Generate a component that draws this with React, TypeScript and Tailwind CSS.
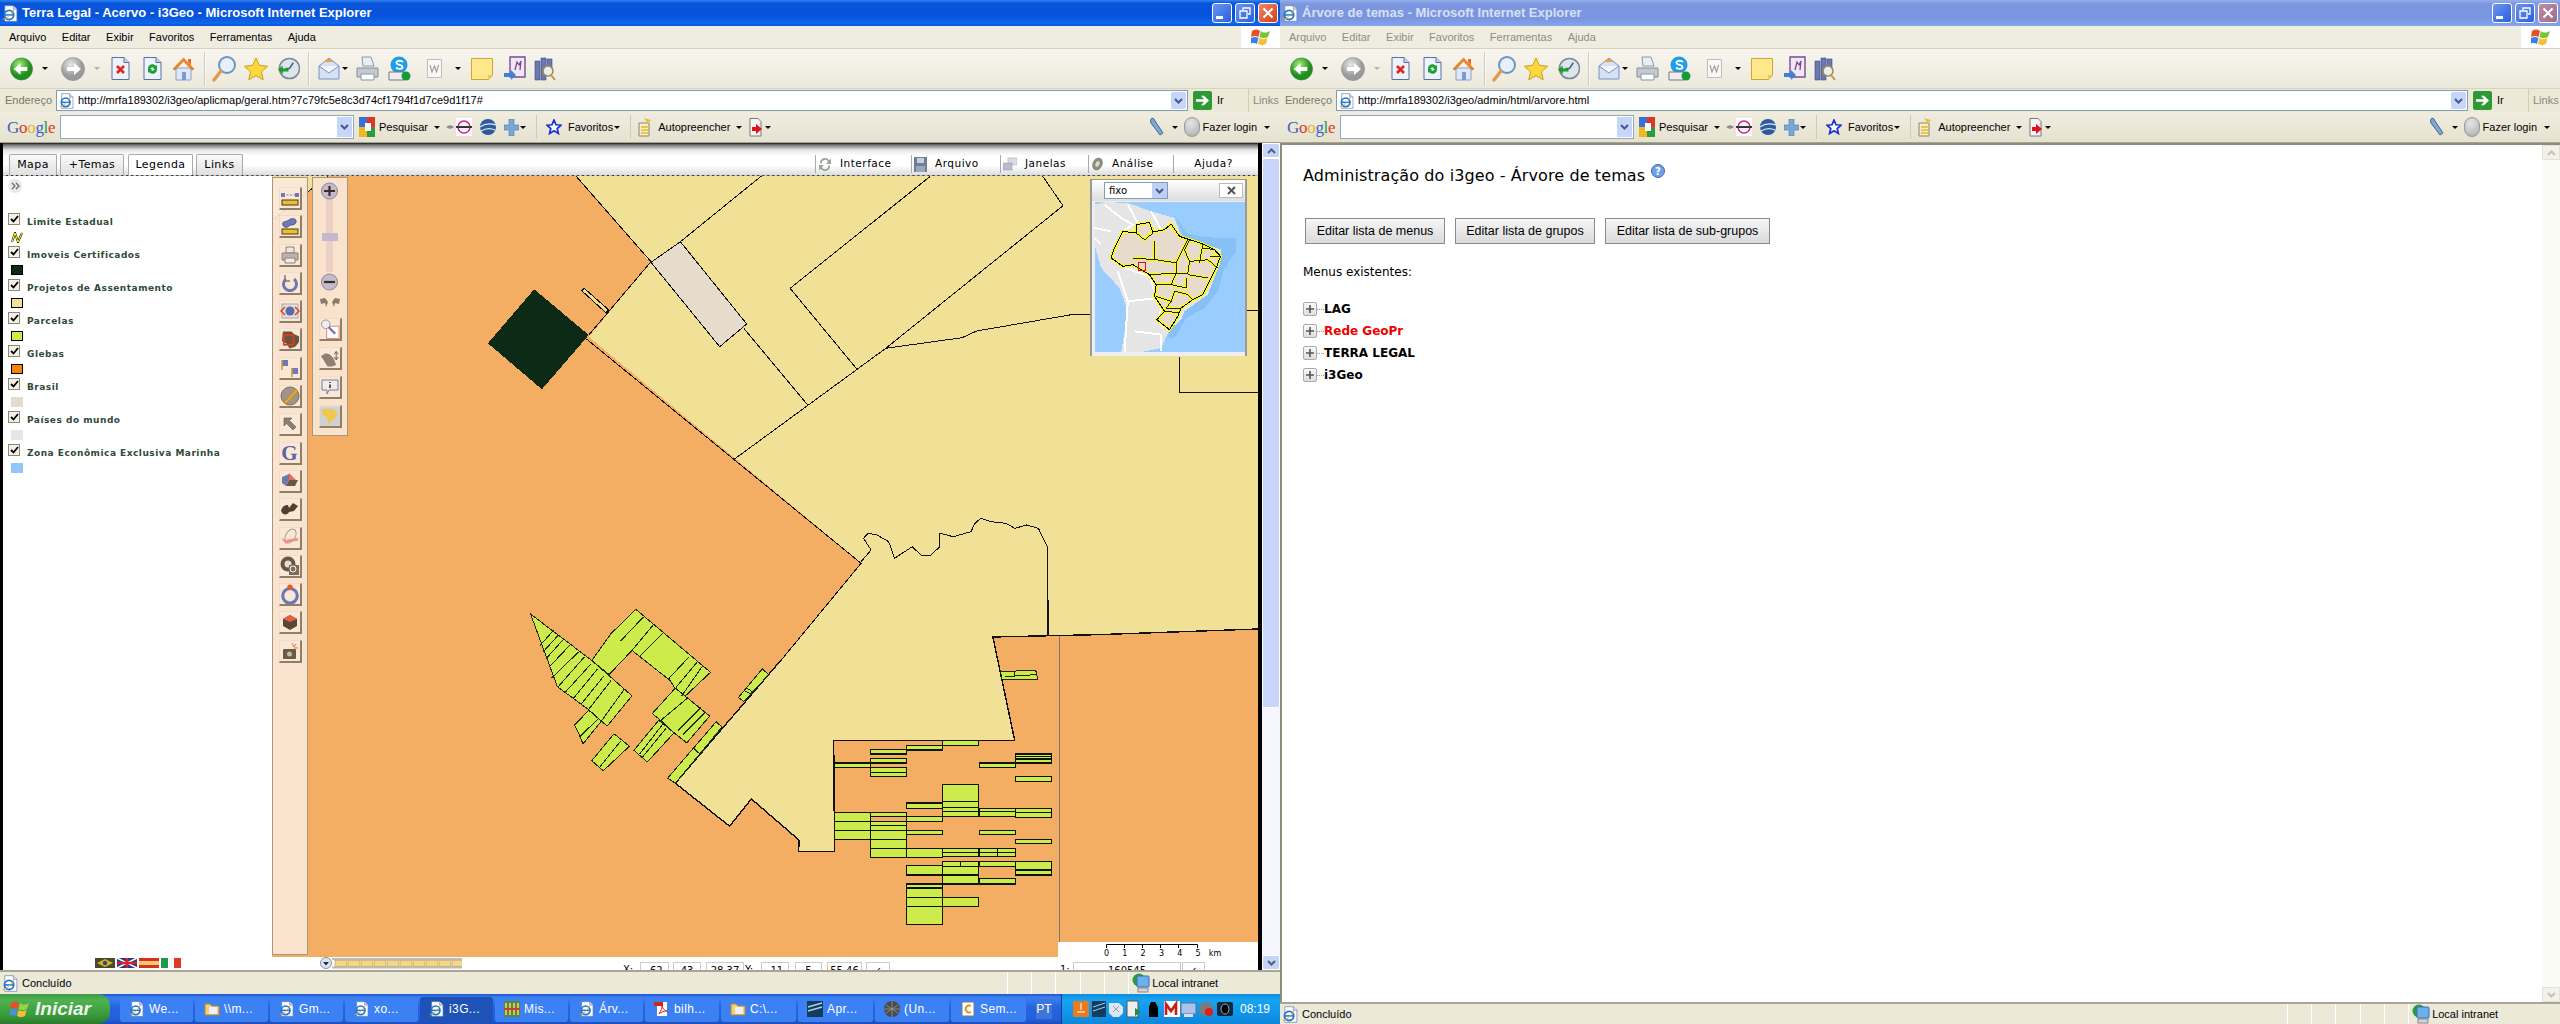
import type { ReactNode } from 'react'

// coordinates read off the two zoomed crops of the map, converted to page pixels
const z11 = (pts: number[][]) => pts.map(([x, y]) => `${(340 + x / 1.704).toFixed(1)},${(160 + y / 3).toFixed(1)}`).join(' ')
const z9 = (pts: number[][]) => pts.map(([x, y]) => `${(500 + x / 2.613).toFixed(1)},${(600 + y / 2.975).toFixed(1)}`).join(' ')
const x9 = (x: number) => 500 + x / 2.613
const y9 = (y: number) => 600 + y / 2.975

const LINE_GREEN = '#cdeb4a'

function Drop({ gray }: { gray?: boolean }) {
  return <span className={`block w-0 h-0 border-x-[3px] border-t-[3px] border-x-transparent ${gray ? 'border-t-[#b5b3a8]' : 'border-t-black'}`} />
}

function Sep() {
  return <span className="block w-[2px] h-[34px] border-l border-[#cfcbb8] border-r-0 bg-white/70" />
}

function IeIcon({ size = 16 }: { size?: number }) {
  return (
    <svg width={size} height={size} viewBox="0 0 24 24" className="shrink-0">
      <path d="M4 1h12l5 5v17H4z" fill="#fff" stroke="#6b7fa8" />
      <path d="M16 1v5h5" fill="#dbe6f7" stroke="#6b7fa8" />
      <circle cx="10" cy="14" r="6.5" fill="none" stroke="#1a78d8" strokeWidth="2.6" />
      <path d="M4 14h12" stroke="#1a78d8" strokeWidth="2.2" />
      <path d="M1 20c4 1 12-7 16-13" fill="none" stroke="#e9a21c" strokeWidth="1.4" />
    </svg>
  )
}

function ToolbarIcons() {
  return (
    <div className="flex items-center h-[39px] pl-[10px] bg-[linear-gradient(#f7f5ee,#ece9dc)]">
      <svg width="23" height="24" viewBox="0 0 24 24"><defs><radialGradient id="gb" cx="40%" cy="30%"><stop offset="0" stopColor="#a8ec7a" /><stop offset="1" stopColor="#1d8f1d" /></radialGradient></defs><circle cx="12" cy="12" r="11.5" fill="url(#gb)" stroke="#2f7a2f" strokeWidth=".6" /><path d="M18 10h-7V6l-7 6 7 6v-4h7z" fill="#fff" /></svg>
      <span className="ml-[9px]"><Drop /></span>
      <svg className="ml-[13px]" width="24" height="24" viewBox="0 0 24 24"><defs><radialGradient id="gf" cx="40%" cy="30%"><stop offset="0" stopColor="#e6e6e6" /><stop offset="1" stopColor="#9a9a9a" /></radialGradient></defs><circle cx="12" cy="12" r="11.5" fill="url(#gf)" stroke="#8a8a8a" strokeWidth=".6" /><path d="M6 10h7V6l7 6-7 6v-4H6z" fill="#fff" /></svg>
      <span className="ml-[9px]"><Drop gray /></span>
      <svg className="ml-[11px]" width="19" height="23" viewBox="0 0 19 23"><path d="M1 .5h12l5 5v17H1z" fill="#eef2fb" stroke="#5a6ea6" /><path d="M13 .5v5h5" fill="#c9d6f0" stroke="#5a6ea6" /><path d="M6 9l7 7M13 9l-7 7" stroke="#e0261c" strokeWidth="2.6" /></svg>
      <svg className="ml-[13px]" width="19" height="23" viewBox="0 0 19 23"><path d="M1 .5h12l5 5v17H1z" fill="#eef2fb" stroke="#5a6ea6" /><path d="M13 .5v5h5" fill="#c9d6f0" stroke="#5a6ea6" /><path d="M5 12a4.500 4.500 0 0 1 8-3l1-1v4h-4l1-1a2.500 2.500 0 0 0-4 1zM14 12a4.500 4.500 0 0 1-8 3l-1 1v-4h4l-1 1a2.500 2.500 0 0 0 4-1z" fill="#17a02c" /></svg>
      <svg className="ml-[10px]" width="23" height="24" viewBox="0 0 23 24"><path d="M4 11h15v12H4z" fill="#dfe8f8" stroke="#8ea2c6" /><path d="M10 15h4v8h-4z" fill="#7c9ad0" /><path d="M11.500 1L1 12l2 1 8.500-9L20 13l2-1z" fill="#f28a1e" stroke="#c8601a" strokeWidth=".6" /><path d="M16 2h3v6l-3-3z" fill="#e0702a" /></svg>
      <span className="ml-[9px]"><Sep /></span>
      <svg className="ml-[6px]" width="24" height="27" viewBox="0 0 24 27"><circle cx="15" cy="10" r="8" fill="#e4f0fb" stroke="#6a94bd" strokeWidth="2" /><path d="M9 16l-7 9" stroke="#e39a4a" strokeWidth="3.4" strokeLinecap="round" /></svg>
      <svg className="ml-[8px]" width="24" height="24" viewBox="0 0 24 24"><path d="M12 1l3.400 7.400 8.100.9-6 5.500 1.700 8L12 18.700 4.800 22.800l1.700-8-6-5.500 8.100-.9z" fill="#fbd83c" stroke="#c8a01c" /></svg>
      <svg className="ml-[9px]" width="23" height="23" viewBox="0 0 24 24"><circle cx="13" cy="12" r="10.500" fill="#dbe6ef" stroke="#7c8a96" strokeWidth="1.600" /><path d="M13 12l4-6M13 12h-4" stroke="#45607c" strokeWidth="1.500" /><path d="M1 13l5-4v3h6v3H6v3z" fill="#1c9a2a" /></svg>
      <span className="ml-[8px]"><Sep /></span>
      <svg className="ml-[8px]" width="22" height="27" viewBox="0 0 22 27"><path d="M1 11L11 3l10 8v13H1z" fill="#d7e0f5" stroke="#7a90c4" /><path d="M1 11l10 7 10-7" fill="#f3f6fd" stroke="#7a90c4" /><path d="M7 7l4-4 4 4z" fill="#f0a030" /></svg>
      <span className="ml-[2px]"><Drop /></span>
      <svg className="ml-[7px]" width="25" height="26" viewBox="0 0 25 26"><path d="M7 1h9l3 9H8z" fill="#e9eef7" stroke="#8c99aa" /><path d="M2 12h21v9H2z" fill="#c5cad0" stroke="#858c96" /><path d="M6 18h13v6H6z" fill="#fff" stroke="#8c96a4" /></svg>
      <svg className="ml-[8px]" width="23" height="26" viewBox="0 0 23 26"><circle cx="11" cy="9" r="8.500" fill="#1c9fe6" /><path d="M15 6c-2-2-7-1.500-6.500 1 .5 2.500 6 1.500 6 4s-4.500 2.500-6.500.5" fill="none" stroke="#fff" strokeWidth="1.800" /><path d="M1 16h15v8H1z" fill="#eee" stroke="#777" /><circle cx="18" cy="20" r="4.500" fill="#169a3c" /></svg>
      <svg className="ml-[16px]" width="15" height="19" viewBox="0 0 15 19"><path d="M.5.500h14v18H.5z" fill="#f8f8f8" stroke="#bdbdbd" /><path d="M3 6l2 7 2.500-6 2 6 2-7" fill="none" stroke="#9a9a9a" strokeWidth="1.100" /></svg>
      <span className="ml-[13px]"><Drop /></span>
      <svg className="ml-[10px]" width="22" height="22" viewBox="0 0 22 22"><path d="M.5.500h21V17l-4 4.500H.5z" fill="#fde98c" stroke="#d0a62c" /><path d="M21 17h-4v4" fill="#f0c850" /></svg>
      <svg className="ml-[11px]" width="22" height="25" viewBox="0 0 22 25"><path d="M6 1h15v20H6z" fill="#f0e8f5" stroke="#7a4a94" strokeWidth="1.400" /><path d="M11 14l2-8 2 3 2-4-1 9" fill="none" stroke="#7a4a94" strokeWidth="1.300" /><path d="M0 17h7v-3l5 5-5 5v-3H0z" fill="#3c80d8" /></svg>
      <svg className="ml-[8px]" width="22" height="26" viewBox="0 0 22 26"><path d="M1 5h5v19H1zM7 2h5v22H7zM13 3h5v12h-5z" fill="#6a78b4" stroke="#3d4a80" strokeWidth=".6" /><circle cx="14" cy="15" r="5" fill="#e7eef6" stroke="#a88a3c" strokeWidth="1.500" /><path d="M17 19l4 5" stroke="#c49a3a" strokeWidth="2" /></svg>
    </div>
  )
}

function AddressBar({ url }: { url: string }) {
  return (
    <div className="flex items-center h-[24px] pl-[5px] bg-[#ece9d8] border-t border-[#d8d4c0]">
      <span className="w-[51px] text-[#7a7868] text-[11px]">Endereço</span>
      <div className="flex-1 flex items-center h-[21px] border border-[#7f9db9] bg-white pl-[2px]">
        <IeIcon size={16} />
        <span className="ml-[3px] flex-1 text-[11px] whitespace-nowrap">{url}</span>
        <span className="flex items-center justify-center w-[15px] h-[17px] mr-[1px] rounded-[2px] bg-[#c7d5f8]">
          <svg width="9" height="6" viewBox="0 0 9 6"><path d="M1 1l3.500 3.500L8 1" fill="none" stroke="#3d5a94" strokeWidth="2" /></svg>
        </span>
      </div>
      <svg className="ml-[5px]" width="19" height="19" viewBox="0 0 19 19"><rect width="19" height="19" rx="2" fill="#2f9a34" /><path d="M3 8.200h8l-3-3.500h3l5 4.800-5 4.800H8l3-3.500H3z" fill="#fff" /></svg>
      <span className="ml-[5px] w-[31px] text-[11px]">Ir</span>
      <span className="w-[32px] h-[24px] flex items-center pl-[4px] border-l border-[#d2cdb6] text-[#8a8878] text-[11px]">Links</span>
    </div>
  )
}

function GoogleBar() {
  return (
    <div className="flex items-center h-[31px] pl-[7px] pr-[10px] bg-[linear-gradient(#f0ede0,#e6e2d0)] border-b border-[#a5a292] text-[11px]">
      <span className="w-[48px] font-['Liberation_Serif',serif] text-[17px] leading-none tracking-[-0.3px]">
        <span className="text-[#3a64c8]">G</span><span className="text-[#d8352a]">o</span><span className="text-[#e8b020]">o</span><span className="text-[#3a64c8]">g</span><span className="text-[#2f9a3c]">l</span><span className="text-[#d8352a]">e</span>
      </span>
      <div className="ml-[5px] flex items-center justify-end w-[294px] h-[24px] bg-white border border-[#8fa8c8] pr-[1px]">
        <span className="flex items-center justify-center w-[15px] h-[20px] bg-[#c7d5f8]">
          <svg width="9" height="6" viewBox="0 0 9 6"><path d="M1 1l3.500 3.500L8 1" fill="none" stroke="#3d5a94" strokeWidth="2" /></svg>
        </span>
      </div>
      <svg className="ml-[5px]" width="16" height="20" viewBox="0 0 16 20"><rect y="0" width="8" height="10" fill="#3a70d8" /><rect x="8" width="8" height="10" fill="#e0352a" /><rect y="10" width="8" height="10" fill="#f0b820" /><rect x="8" y="10" width="8" height="10" fill="#2f9a3c" /><path d="M6 6h6v8H6z" fill="#fff" /></svg>
      <span className="ml-[4px]">Pesquisar</span>
      <span className="ml-[6px]"><Drop /></span>
      <span className="ml-[6px] text-[#888] text-[8px]">◂▸</span>
      <svg className="ml-[2px]" width="16" height="18" viewBox="0 0 16 18"><rect width="16" height="18" fill="#fff" /><circle cx="8" cy="9" r="6" fill="none" stroke="#d81c8c" strokeWidth="1.500" /><path d="M0 9h16" stroke="#333" strokeWidth="2" /></svg>
      <svg className="ml-[8px]" width="16" height="18" viewBox="0 0 16 18"><circle cx="8" cy="9" r="8" fill="#2c5a9c" /><path d="M0 9c5-4 10-4 16-2M1 13c5-3 10-3 14-1" fill="none" stroke="#dfe8f0" strokeWidth="1.300" /></svg>
      <svg className="ml-[8px]" width="15" height="17" viewBox="0 0 15 17"><path d="M5 0h5v6h5v5h-5v6H5v-6H0V6h5z" fill="#7ba7d4" stroke="#4a78a8" strokeWidth=".6" /></svg>
      <span className="ml-[1px]"><Drop /></span>
      <span className="ml-[10px] w-px h-[24px] bg-[#cfcbb8]" />
      <svg className="ml-[9px]" width="16" height="16" viewBox="0 0 16 16"><path d="M8 1l2 4.800 5 .4-3.800 3.300 1.200 5L8 11.800 3.600 14.500l1.200-5L1 6.200l5-.4z" fill="#fff" stroke="#1c2fd8" strokeWidth="1.700" /></svg>
      <span className="ml-[6px]">Favoritos</span>
      <span className="ml-[1px]"><Drop /></span>
      <span className="ml-[10px] w-px h-[24px] bg-[#cfcbb8]" />
      <svg className="ml-[7px]" width="15" height="20" viewBox="0 0 15 20"><path d="M1 6h10v13H1z" fill="#f4efd2" stroke="#8a8468" /><path d="M3 10h7M3 13h7M3 16h7" stroke="#e8b820" strokeWidth="1.600" /><path d="M6 1l7 2-3 4z" fill="#e8c040" /></svg>
      <span className="ml-[5px]">Autopreencher</span>
      <span className="ml-[6px]"><Drop /></span>
      <svg className="ml-[7px]" width="15" height="19" viewBox="0 0 15 19"><path d="M1 .5h8l3 3V18H1z" fill="#f5f5f5" stroke="#777" /><path d="M3 9h4V6l6 5-6 5v-3H3z" fill="#e0121c" /></svg>
      <span className="ml-[1px]"><Drop /></span>
      <span className="flex-1" />
      <svg width="17" height="20" viewBox="0 0 17 20"><path d="M3 1a4 4 0 0 0-1 5l9 12 3-2L6 4a4 4 0 0 0-3-3z" fill="#7fa9d4" stroke="#41688f" /></svg>
      <span className="ml-[6px]"><Drop /></span>
      <span className="ml-[6px] w-[16px] h-[20px] rounded-full bg-[radial-gradient(circle_at_40%_30%,#e6e6e6,#aaa)] border border-[#999]" />
      <span className="ml-[3px]">Fazer login</span>
      <span className="ml-[7px]"><Drop /></span>
    </div>
  )
}

function WindowChrome({ title, url, active, children }: { title: string; url: string; active: boolean; children: ReactNode }) {
  return (
    <div className="flex flex-col flex-1 min-h-0">
      <div className={`flex items-center h-[26px] pl-[2px] pr-[2px] ${active ? 'bg-[linear-gradient(#2f84f2,#0a55da_12%,#0553db_60%,#0f66ec_90%,#0a55d5)]' : 'bg-[linear-gradient(#94b0ea,#7c97e0_15%,#7a95df_70%,#84a6ea)]'}`}>
        <IeIcon size={17} />
        <span className={`ml-[3px] flex-1 font-bold text-[13px] whitespace-nowrap ${active ? 'text-white' : 'text-[#d8e0f5]'}`}>{title}</span>
        <span className="flex items-center justify-center w-[20px] h-[20px] rounded-[3px] border border-white bg-[linear-gradient(135deg,#6a96ee,#2a5ee0)]"><span className="mt-[8px] mr-[5px] w-[7px] h-[3px] bg-white" /></span>
        <span className="ml-[3px] flex items-center justify-center w-[20px] h-[20px] rounded-[3px] border border-white bg-[linear-gradient(135deg,#6a96ee,#2a5ee0)]">
          <svg width="12" height="12" viewBox="0 0 12 12" fill="none" stroke="#fff" strokeWidth="1.300"><path d="M4 3V1h7v6H9" /><path d="M1 4h7v7H1z" /></svg>
        </span>
        <span className={`ml-[3px] flex items-center justify-center w-[20px] h-[20px] rounded-[3px] border border-white ${active ? 'bg-[linear-gradient(135deg,#ee8a6c,#d83c14)]' : 'bg-[linear-gradient(135deg,#b88ea6,#a06a8c)]'}`}>
          <svg width="12" height="12" viewBox="0 0 12 12"><path d="M1.500 1.500l9 9M10.500 1.500l-9 9" stroke="#fff" strokeWidth="2" /></svg>
        </span>
      </div>
      <div className="flex items-stretch h-[23px] bg-[#efece0] border-b border-[#d8d2bd]">
        <div className={`flex flex-1 items-center gap-[15.500px] pl-[9px] text-[11px] ${active ? 'text-black' : 'text-[#8f8d80]'}`}>
          {['Arquivo', 'Editar', 'Exibir', 'Favoritos', 'Ferramentas', 'Ajuda'].map((m) => <span key={m}>{m}</span>)}
        </div>
        <div className="flex items-center justify-center w-[39px] bg-white">
          <svg width="20" height="18" viewBox="0 0 20 18"><path d="M1 3c3-2 5-2 8 0L7.500 9C5 7.500 3 7.500 0 9z" fill="#e8502a" /><path d="M10 3c3 2 5 2 9 0l-2 6c-3 1.500-5 1.500-8.500 0z" fill="#7cc03c" /><path d="M0 10c3-1.500 5-1.500 7.500 0L6 16c-2.500-1.500-5-1.500-7.500 0z" fill="#3c7fe8" /><path d="M8.500 10c3 1.500 5 1.500 8 0l-1.500 6c-3 1.500-5 1.500-8 0z" fill="#f5c030" /></svg>
        </div>
      </div>
      <ToolbarIcons />
      <AddressBar url={url} />
      <GoogleBar />
      {children}
      <div className={`flex items-center shrink-0 bg-[#ece9d8] border-t-2 border-[#a8a594] pl-[2px] text-[11px] ${active ? 'h-[24px]' : 'h-[22px]'}`}>
        <IeIcon size={17} />
        <span className="ml-[3px] w-[985px]">Concluído</span>
        {[0, 1, 2, 3, 4, 5].map((i) => <span key={i} className="w-[24.200px] h-full border-l border-[#fff]" />)}
        <svg className="ml-[-20px]" width="18" height="20" viewBox="0 0 18 20"><circle cx="7" cy="7" r="6.500" fill="#2a9a4a" /><rect x="5" y="3" width="12" height="11" rx="1" fill="#6ab0ee" stroke="#3c6ea8" /><rect x="6" y="15" width="10" height="4" fill="#cfd3dc" stroke="#888" /></svg>
        <span className="ml-[2px]">Local intranet</span>
      </div>
    </div>
  )
}

function Tab({ label, w, on }: { label: string; w: string; on?: boolean }) {
  return (
    <span className={`flex items-center justify-center h-[21px] rounded-t-[2px] border border-b-0 border-[#aaa] font-['DejaVu_Sans',sans-serif] text-[11px] tracking-[0.4px] ${w} ${on ? 'bg-white' : 'bg-[linear-gradient(#fafafa,#e0e0e0)]'}`}>{label}</span>
  )
}

function TopMenu() {
  const items: [string, string, ReactNode][] = [
    ['Interface', 'w-[96px]', <svg width="14" height="15" viewBox="0 0 14 15"><path d="M2 6a5 5 0 0 1 9-3l2-1v5H8l2-2a3 3 0 0 0-6 2zM12 9a5 5 0 0 1-9 3l-2 1V8h5l-2 2a3 3 0 0 0 6-2z" fill="#9aa59a" /></svg>],
    ['Arquivo', 'w-[89px]', <svg width="13" height="15" viewBox="0 0 13 15"><rect width="13" height="15" fill="#6e7e98" /><rect x="3" y="1" width="7" height="5" fill="#c8d0dc" /><rect x="2" y="9" width="9" height="6" fill="#9aa8bc" /></svg>],
    ['Janelas', 'w-[88px]', <svg width="14" height="14" viewBox="0 0 14 14"><rect x="5" y="1" width="9" height="7" fill="#d8dcea" stroke="#aab" strokeWidth=".6" /><rect x="0" y="6" width="9" height="7" fill="#b8bcd0" stroke="#99a" strokeWidth=".6" /></svg>],
    ['Análise', 'w-[85px]', <svg width="13" height="14" viewBox="0 0 13 14"><ellipse cx="6.500" cy="7" rx="5" ry="6.500" transform="rotate(25 6.500 7)" fill="#8c8c7a" /><ellipse cx="6.500" cy="7" rx="2" ry="3" transform="rotate(25 6.500 7)" fill="#d8d8cc" /></svg>],
  ]
  return (
    <div className="ml-auto flex self-start mt-[12px] h-[18px] font-['DejaVu_Sans',sans-serif] text-[10.500px] tracking-[0.5px]">
      {items.map(([label, w, icon]) => (
        <span key={label} className={`flex items-center gap-[8px] pl-[2px] border-l border-[#aaa] ${w}`}>
          {icon}
          {label}
        </span>
      ))}
      <span className="flex items-center justify-center w-[85px] pr-[5px] border-l border-[#aaa]">Ajuda?</span>
    </div>
  )
}

const LEGEND: { label: string; swatch: string; line?: boolean; noBorder?: boolean }[] = [
  { label: 'Limite Estadual', swatch: '', line: true },
  { label: 'Imoveis Certificados', swatch: '#0c2a15' },
  { label: 'Projetos de Assentamento', swatch: '#f0e196' },
  { label: 'Parcelas', swatch: LINE_GREEN },
  { label: 'Glebas', swatch: '#f98200' },
  { label: 'Brasil', swatch: '#e6dccb', noBorder: true },
  { label: 'Países do mundo', swatch: '#e6e6e6', noBorder: true },
  { label: 'Zona Econômica Exclusiva Marinha', swatch: '#8fc6fb', noBorder: true },
]

function Legend() {
  return (
    <div className="flex flex-col w-[269px] shrink-0 bg-white pl-[5px] overflow-hidden">
      <span className="mt-[3px] flex items-center justify-center w-[14px] h-[14px] rounded-full bg-[#e8e8e8]">
        <svg width="9" height="8" viewBox="0 0 9 8"><path d="M1 1l3 3-3 3M5 1l3 3-3 3" fill="none" stroke="#666" strokeWidth="1.200" /></svg>
      </span>
      <div className="mt-[20px] flex flex-col">
        {LEGEND.map((item) => (
          <div key={item.label} className="h-[33px]">
            <div className="flex items-start h-[16px]">
              <span className="flex items-center justify-center w-[12px] h-[12px] bg-[#f3f0e6] border border-[#8a8878]">
                <svg width="9" height="8" viewBox="0 0 9 8"><path d="M1 4l2.500 2.500L8 1" fill="none" stroke="#000" strokeWidth="1.800" /></svg>
              </span>
              <span className="ml-[7px] mt-[2px] font-['DejaVu_Sans',sans-serif] font-bold text-[9px] leading-[14px] tracking-[0.5px] text-[#2f4a38] whitespace-nowrap">{item.label}</span>
            </div>
            <div className="mt-[3px] ml-[3px]">
              {item.line ? (
                <svg width="12" height="11" viewBox="0 0 12 11"><path d="M1 10L4 1l3 9 4-9" fill="none" stroke="#111" strokeWidth="2" /><path d="M1 10L4 1l3 9 4-9" fill="none" stroke="#ff0" strokeWidth="1" /></svg>
              ) : (
                <span className={`block w-[12px] h-[10px] ${item.noBorder ? '' : 'border border-black'}`} style={{ background: item.swatch }} />
              )}
            </div>
          </div>
        ))}
      </div>
    </div>
  )
}

const PLOTS: number[][] = [
  [968, 445, 1062, 458], [1062, 432, 1157, 446], [1157, 418, 1251, 433], [968, 472, 1062, 485], [874, 485, 968, 499],
  [968, 499, 1062, 526, 512], [1252, 485, 1347, 499], [1347, 458, 1442, 485, 466, 473], [1347, 526, 1442, 541],
  [1157, 550, 1251, 645, 600, 617, 630], [1062, 604, 1157, 620], [1252, 620, 1347, 643, 630], [1347, 620, 1442, 647, 633],
  [874, 632, 968, 712, 658, 685], [968, 632, 1062, 645], [1062, 645, 1157, 658], [968, 658, 1062, 765, 672, 685, 712, 739],
  [1062, 685, 1157, 698], [1252, 685, 1347, 698], [1347, 712, 1442, 725], [1062, 739, 1157, 766], [1157, 739, 1251, 764, 750],
  [1252, 739, 1347, 764, 750], [1157, 779, 1251, 845, 793, 818], [1252, 779, 1347, 792], [1347, 779, 1442, 818, 803],
  [1062, 791, 1157, 818], [1252, 829, 1347, 845], [1063, 845, 1157, 965, 857, 884, 911], [1157, 884, 1251, 911],
]

const LEFT_PARCELS: number[][][] = [
  [[80, 42], [240, 180], [345, 285], [280, 375], [230, 325], [150, 258]],
  [[355, 28], [550, 215], [475, 295], [445, 240], [345, 150], [285, 222], [240, 180], [290, 100]],
  [[195, 372], [232, 328], [265, 360], [217, 428], [205, 395]],
  [[240, 478], [298, 398], [338, 435], [270, 508]],
  [[398, 338], [458, 262], [548, 345], [488, 425], [455, 395], [420, 358]],
  [[350, 447], [415, 358], [455, 395], [385, 482]],
  [[438, 530], [565, 362], [580, 378], [458, 545]],
  [[623, 290], [685, 205], [702, 222], [637, 302]],
  [[1308, 212], [1400, 210], [1405, 235], [1312, 237]],
]

const LEFT_LINES: number[][] = [
  [105, 135, 140, 90], [112, 155, 152, 105], [120, 175, 165, 118], [128, 200, 182, 135], [135, 232, 205, 155], [152, 258, 220, 170],
  [170, 275, 238, 190], [190, 295, 255, 205], [212, 310, 272, 225], [232, 325, 290, 240], [265, 360, 325, 265],
  [315, 122, 375, 50], [345, 150, 400, 75], [365, 168, 425, 100], [440, 235, 495, 168], [460, 260, 515, 185], [475, 285, 530, 195],
  [210, 405, 255, 355], [262, 495, 315, 420], [365, 458, 425, 370], [372, 468, 435, 380], [420, 358, 490, 292], [465, 388, 525, 320],
  [478, 400, 535, 335], [505, 440, 522, 458], [645, 262, 662, 275], [640, 270, 658, 282], [1320, 228, 1400, 222], [1345, 212, 1345, 225],
]

function MapDrawing() {
  return (
    <svg width="986" height="781" viewBox="272 176 986 781" className="block" shapeRendering="crispEdges">
      <rect x="272" y="176" width="986" height="781" fill="#f4ae63" />
      <polygon points="272,176 328,176 272,220" fill="#f0e196" />
      <path d="M272 220L328 176" stroke="#222" fill="none" />
      <polygon points="576,176 650,262 589,337 861,563 781,660 675,783 730,826 751,799 799,840 798.500,851 834.500,851 834,740.500 1015,740.500 993,637 1258,629 1258,176" fill="#f0e196" />
      <g fill="none" stroke="#111" strokeWidth="1">
        <polyline points={z11([[402, 48], [530, 305], [424, 525]])} />
        <polyline points={z11([[718, 48], [580, 245], [530, 307]])} />
        <polyline points={z11([[420, 537], [888, 1210], [752, 1500]])} />
        <polyline points={z11([[688, 505], [797, 735]])} />
        <polyline points={z11([[1005, 50], [767, 385], [882, 630]])} />
        <polyline points={z11([[1197, 48], [1232, 137], [930, 565], [670, 900]])} />
        <polyline points={z11([[930, 565], [1060, 533], [1085, 513], [1250, 463], [1280, 463]])} />
        <polyline points={z11([[1545, 452], [1568, 452]])} />
        <polyline points={z11([[1430, 590], [1430, 697], [1568, 697]])} />
        <polyline points={z11([[888, 1205], [905, 1170], [892, 1135], [900, 1120], [915, 1125], [935, 1145], [945, 1195], [975, 1160], [990, 1185], [1005, 1188], [1022, 1160], [1022, 1120], [1045, 1130], [1075, 1115], [1082, 1090], [1092, 1075], [1110, 1085], [1135, 1090], [1150, 1105], [1170, 1095], [1190, 1105], [1205, 1160], [1207, 1425]])} />
        <polyline points={z9([[735, 178], [458, 545], [600, 673], [657, 592], [782, 715], [780, 748], [874, 748], [872, 418], [1345, 418], [1288, 110], [1568, 103]])} strokeWidth="1.400" />
        <path d="M1100 634.600L1258 629" strokeWidth="1.400" />
        <path d="M1048 600V635" strokeWidth="1.400" />
        <path d="M1059.500 636V945" stroke="#777" />
      </g>
      <polygon points={z11([[580, 245], [693, 492], [647, 560], [530, 307]])} fill="#e6dccb" stroke="#111" />
      <polygon points={z11([[331, 388], [424, 525], [344, 688], [252, 550]])} fill="#0c2a15" />
      <polygon points={z11([[412, 392], [416, 385], [458, 450], [453, 458]])} fill="#f0e196" stroke="#111" />
      <g fill={LINE_GREEN} stroke="#1c2a10" strokeWidth="1">
        {LEFT_PARCELS.map((p, i) => <polygon key={i} points={z9(p)} />)}
        {LEFT_LINES.map(([a, b, c, d], i) => <line key={i} x1={x9(a)} y1={y9(b)} x2={x9(c)} y2={y9(d)} />)}
      </g>
      <g fill={LINE_GREEN} stroke="#0c1408" strokeWidth="1.200">
        {PLOTS.map(([a, b, c, d, ...rows], i) => (
          <g key={i}>
            <rect x={x9(a)} y={y9(b)} width={x9(c) - x9(a)} height={y9(d) - y9(b)} />
            {rows.map((r) => <line key={r} x1={x9(a)} x2={x9(c)} y1={y9(r)} y2={y9(r)} />)}
          </g>
        ))}
        <line x1={x9(1300)} x2={x9(1300)} y1={y9(739)} y2={y9(764)} />
        <line x1={x9(1204)} x2={x9(1204)} y1={y9(779)} y2={y9(793)} />
      </g>
    </svg>
  )
}

const BRAZIL = 'M225,190 L265,183 L275,212 L310,205 L330,188 L355,225 L385,235 L425,248 L460,265 L478,285 L465,320 L440,370 L425,400 L395,415 L360,440 L350,465 L325,505 L287,475 L310,450 L280,405 L285,370 L265,340 L215,310 L185,315 L150,290 L158,265 L185,210 L225,215 Z'
const STATES = 'M280,240 L280,295 L345,305 L380,235 M215,290 L280,295 M265,340 L345,335 L345,305 M345,335 L380,335 L385,300 L370,265 L385,235 M385,300 L440,295 L470,320 M425,248 L415,305 M380,340 L440,350 M345,335 L330,370 L285,370 M330,370 L375,380 L375,350 M285,405 L330,420 L340,390 L380,400 L395,415 M330,420 L315,440 L360,440 M310,450 L355,455 M225,215 L250,235 L275,212 M425,260 L460,265 M445,285 L478,285'

function MiniMap() {
  return (
    <div className="absolute left-[818px] top-[3px] flex flex-col w-[157px] h-[177px] bg-[#eee] border-x-2 border-t border-[#999]">
      <div className="flex items-center h-[21px] shrink-0 bg-[linear-gradient(#fff,#ddd)]">
        <div className="ml-[12px] flex items-center justify-between w-[64px] h-[17px] bg-white border border-[#7f9db9] pl-[4px] text-[10px] font-['DejaVu_Sans',sans-serif]">
          fixo
          <span className="flex items-center justify-center w-[15px] h-[15px] bg-[#c0cff5]">
            <svg width="9" height="6" viewBox="0 0 9 6"><path d="M1 1l3.500 3.500L8 1" fill="none" stroke="#3d5a94" strokeWidth="2" /></svg>
          </span>
        </div>
        <span className="ml-auto mr-[2px] flex items-center justify-center w-[24px] h-[15px] bg-white border border-[#bbb]">
          <svg width="9" height="9" viewBox="0 0 9 9"><path d="M1 1l7 7M8 1L1 8" stroke="#555" strokeWidth="2" /></svg>
        </span>
      </div>
      <svg className="ml-[2px] mt-px" width="151" height="150" viewBox="100 122 450 450" shapeRendering="crispEdges">
        <rect x="100" y="122" width="450" height="450" fill="#99ccff" />
        <path d="M340,160 L375,215 L430,228 L525,230 L525,270 L490,320 L470,390 L430,440 L375,470 L340,530 L320,530 L340,440 L400,300 Z" fill="#86c0f4" />
        <path d="M100,130 L130,122 L200,125 L270,150 L340,170 L360,225 L420,245 L480,265 L475,310 L440,400 L370,450 L360,475 L325,505 L300,560 L240,572 L180,572 L200,450 L175,380 L120,320 L100,250 Z" fill="#e5e5e5" />
        <path d="M130,130 L180,170 L215,190 L185,210 L150,290 L190,320 L265,345 L285,400 L300,440 L290,480 L325,510 M100,200 L150,210 M120,250 L100,230 M170,330 L200,420 L190,572 M200,420 L290,410 M220,510 L300,520 L300,570 M270,150 L300,205 M200,130 L230,185" fill="none" stroke="#fff" strokeWidth="6" />
        <path d={BRAZIL} fill="#e7dccb" stroke="#ffff00" strokeWidth="9" />
        <path d={STATES} fill="none" stroke="#ffff00" strokeWidth="8" />
        <path d={BRAZIL} fill="none" stroke="#000" strokeWidth="3" />
        <path d={STATES} fill="none" stroke="#000" strokeWidth="2.600" />
        <rect x="232" y="303" width="21" height="23" fill="none" stroke="#e01010" strokeWidth="3" />
      </svg>
    </div>
  )
}

function MapBtn({ children }: { children: ReactNode }) {
  return (
    <span className="flex items-center justify-center w-[23px] h-[23px] shrink-0 bg-[#fbeadb]/60 border-t border-l border-[#f0dcc8] border-r-2 border-b-2 border-r-[#8f7f68] border-b-[#8f7f68] overflow-hidden">{children}</span>
  )
}

const P = '#7078b4'
const BR = '#6a5540'
const TOOL_ICONS: ReactNode[] = [
  <svg width="18" height="16" viewBox="0 0 18 16"><path d="M2 5h14" stroke={P} strokeDasharray="2 1.500" /><rect x="0" y="3" width="4" height="4" fill={P} /><rect x="14" y="3" width="4" height="4" fill={P} /><rect x="1" y="10" width="16" height="5" fill="#e8c030" stroke="#4a3a10" /></svg>,
  <svg width="18" height="18" viewBox="0 0 18 18"><path d="M2 8c-2-4 4-3 6-5s8-2 7 2-5 2-7 4-5 2-6-1z" fill={P} stroke="#4a5490" /><rect x="1" y="12" width="16" height="5" fill="#e8c030" stroke="#4a3a10" /></svg>,
  <svg width="18" height="18" viewBox="0 0 18 18"><path d="M5 1h8v6H5z" fill="#efe8df" stroke="#8f8070" /><path d="M1 7h16v7H1z" fill="#c0b0b0" stroke="#8f8070" /><path d="M4 12h10v5H4z" fill="#f2ebe2" stroke="#8f8070" /></svg>,
  <svg width="18" height="18" viewBox="0 0 18 18"><path d="M13 5a6.500 6.500 0 1 1-8 0" fill="none" stroke={P} strokeWidth="3" /><path d="M4 1v6h5" fill="none" stroke="#8a7a6a" strokeWidth="1.500" /></svg>,
  <svg width="20" height="18" viewBox="0 0 20 18"><rect x="2" y="2" width="16" height="14" fill="#e6ddd5" stroke="#aaa" /><circle cx="10" cy="9" r="4.500" fill="#5a6ab0" /><path d="M5 5L1 9l4 4M15 5l4 4-4 4" fill="none" stroke="#e04020" strokeWidth="1.500" /></svg>,
  <svg width="21" height="21" viewBox="0 0 21 21"><path d="M3 2h9l3 3 5 2v6l-4 5-6 2-3-5-5-3z" fill={BR} /><rect x="4" y="6" width="10" height="10" fill="none" stroke="#e03c1c" strokeWidth="1.800" /></svg>,
  <svg width="20" height="20" viewBox="0 0 20 20"><path d="M2 2h6v6H2zM12 10h6v6h-6z" fill={P} /><path d="M2 2v10M12 10v9" stroke="#c89a3c" strokeWidth="1.600" /></svg>,
  <svg width="20" height="20" viewBox="0 0 20 20"><circle cx="10" cy="10" r="9" fill="#a09488" stroke="#7a6e60" /><path d="M4 16L16 3l2 2L6 18z" fill="#e8a830" stroke="#b87c18" strokeWidth=".6" /></svg>,
  <svg width="16" height="16" viewBox="0 0 16 16"><path d="M2 2h8L7.500 4.500 14 11l-3 3-6.500-6.500L2 10z" fill="#8a8074" stroke="#5c5448" strokeWidth=".6" /></svg>,
  <span className="font-['Liberation_Serif',serif] font-bold text-[21px] leading-[20px] text-[#5a62a8]">G</span>,
  <svg width="18" height="18" viewBox="0 0 18 18"><path d="M8 1l7 7H8z" fill="#e86a50" /><path d="M8 8h9l-3 6H5z" fill={BR} /><path d="M8 2v6l-3 6-4-3V5z" fill={P} /></svg>,
  <svg width="19" height="14" viewBox="0 0 19 14"><path d="M1 9c1-4 3-6 7-6l1 3 4-5 5 3-4 5-5 1c-1 3-6 4-8-1z" fill="#51402f" /></svg>,
  <svg width="21" height="21" viewBox="0 0 21 21"><ellipse cx="11" cy="9" rx="5" ry="8" fill="none" stroke="#a89c90" transform="rotate(30 11 9)" /><path d="M1 11l5 2 5-1 8-1v3l-8 1-5 2z" fill="#ee8f88" /></svg>,
  <svg width="20" height="20" viewBox="0 0 20 20"><circle cx="8" cy="8" r="7.500" fill={BR} /><circle cx="8" cy="8" r="3.500" fill="#e6ddd5" /><rect x="9" y="9" width="10" height="10" fill="#7a6a58" /><circle cx="13" cy="13" r="3" fill="none" stroke="#fff" /></svg>,
  <svg width="22" height="22" viewBox="0 0 22 22"><circle cx="11" cy="13" r="8" fill="none" stroke="#6a78b4" strokeWidth="3.400" /><circle cx="11" cy="3.500" r="3" fill="#e85a30" /></svg>,
  <svg width="18" height="18" viewBox="0 0 18 18"><path d="M2 6l7-4 7 4v7l-7 4-7-4z" fill="#5a4636" /><path d="M2 6l7-4 7 4-7 3z" fill="#e06040" /></svg>,
  <svg width="18" height="18" viewBox="0 0 18 18"><rect x="2" y="7" width="13" height="10" rx="1" fill="#6a5a48" /><circle cx="8.500" cy="12" r="2.500" fill="#c8b8a8" /><path d="M11 1l2 4M15 2l-2 3M17 6h-4" stroke="#e8703c" /></svg>,
]

function MapPanels() {
  return (
    <>
      <div className="absolute left-0 top-[1px] bottom-[2px] w-[36px] flex flex-col items-center gap-[5.300px] pt-[9px] bg-[#fbeadb]/90 border border-[#a8957e] overflow-hidden">
        {TOOL_ICONS.map((icon, i) => <MapBtn key={i}>{icon}</MapBtn>)}
      </div>
      <div className="absolute left-[40px] top-[1px] w-[36px] h-[259px] flex flex-col items-center bg-[#fae3cd] border border-[#a8957e]">
        <svg width="34" height="136" viewBox="0 0 34 136" className="shrink-0">
          <rect x="13" y="18" width="7" height="76" fill="#ecd0c4" />
          <circle cx="16.500" cy="13" r="8" fill="#c4bace" stroke="#8f84a0" />
          <path d="M11 13h11M16.500 8v10" stroke="#3c3020" strokeWidth="2.200" />
          <path d="M9 55h16v8H9z" fill="#c4bace" />
          <circle cx="16.500" cy="104" r="8" fill="#c4bace" stroke="#8f84a0" />
          <path d="M11 104h11" stroke="#3c3020" strokeWidth="2.200" />
          <path d="M7 121l5-1 3 4-2 5-1-4-4 1zM27 121l-5-1-3 4 2 5 1-4 4 1z" fill="#8a7a68" />
        </svg>
        <div className="mt-[4px] flex flex-col gap-[6px]">
          <MapBtn><svg width="21" height="21" viewBox="0 0 21 21"><rect x="7" y="7" width="13" height="13" fill="#fff" stroke="#f0806a" /><circle cx="6" cy="5" r="4.500" fill="#eee" stroke="#9a90a4" /><path d="M9 8l7 7" stroke={P} strokeWidth="2.400" /></svg></MapBtn>
          <MapBtn><svg width="21" height="19" viewBox="0 0 21 19"><path d="M1 7l5-3 4 1 4 4 3 7-4 2H8z" fill="#8f8074" /><path d="M17 3v7M15 5l2-3 2 3M15 8l2 3 2-3" stroke="#6a5a4c" fill="none" /></svg></MapBtn>
          <MapBtn><svg width="18" height="16" viewBox="0 0 18 16"><path d="M1 1h16v10h-9l-2 4v-4H1z" fill="#f4ece2" stroke="#7078b4" /><path d="M9 3v1M9 5.500V9" stroke="#333" strokeWidth="1.600" /></svg></MapBtn>
          <MapBtn><svg width="21" height="21" viewBox="0 0 21 21"><rect width="21" height="21" fill="#cfd2d4" /><path d="M2 3l10-1 7 5-3 6-4 2-2 5-3-8-5-4z" fill="#f0c850" /></svg></MapBtn>
        </div>
      </div>
    </>
  )
}

function ScaleBox() {
  return (
    <div className="absolute right-0 bottom-0 w-[200px] h-[15px] bg-white">
      <svg width="200" height="9" viewBox="0 0 200 9" className="block">
        <path d="M48.500 6V2.500H139.500V6M66.500 2.500V6M84.500 2.500V6M102.500 2.500V6M120.500 2.500V6" fill="none" stroke="#000" />
      </svg>
      <div className="flex pl-[46px] gap-[13.300px] font-['DejaVu_Sans',sans-serif] text-[8px] leading-[6px] h-[6px] overflow-visible">
        {[0, 1, 2, 3, 4, 5].map((n) => <span key={n} className="w-[5px]">{n}</span>)}
        <span className="-ml-[5px]">km</span>
      </div>
    </div>
  )
}

function BottomBar() {
  const inputs: [string, string][] = [['-62', 'ml-[2px] w-[29px]'], ['43', 'ml-[4px] w-[28px]'], ['28.37', 'ml-[5px] w-[38px]']]
  const inputsY: [string, string][] = [['-11', 'ml-[1px] w-[28px]'], ['5', 'ml-[6px] w-[27px]'], ['55.46', 'ml-[5px] w-[35px]']]
  return (
    <div className="flex items-start h-[13px] shrink-0 bg-white overflow-hidden font-['DejaVu_Sans',sans-serif] text-[10px]">
      <svg className="ml-[92px] mt-px shrink-0" width="86" height="10" viewBox="0 0 86 10">
        <rect width="20" height="10" fill="#4a4a30" /><path d="M10 1l8 4-8 4-8-4z" fill="#d8b020" /><circle cx="10" cy="5" r="2.200" fill="#2a4a8c" />
        <rect x="22" width="20" height="10" fill="#2a3a80" /><path d="M22 0l20 10M42 0L22 10" stroke="#fff" strokeWidth="1.500" /><path d="M32 0v10M22 5h20" stroke="#d82030" strokeWidth="2.400" />
        <rect x="44" width="20" height="10" fill="#d83020" /><rect x="44" y="3" width="20" height="4" fill="#f0c870" />
        <rect x="66" width="7" height="10" fill="#1c9a4c" /><rect x="73" width="6" height="10" fill="#f6f6f6" /><rect x="79" width="7" height="10" fill="#dc3c20" />
      </svg>
      <svg className="ml-[139px] shrink-0" width="142" height="13" viewBox="0 0 142 13">
        <circle cx="6" cy="6" r="5.500" fill="#dfe3ee" stroke="#8a90a4" /><path d="M3 5h6L6 8.500z" fill="#1c2a5c" />
        <rect x="12" y="1" width="130" height="2" fill="#bbb" />
        <rect x="12" y="9.500" width="130" height="2" fill="#bbb" />
        {Array.from({ length: 10 }).map((_, i) => <rect key={i} x={15 + i * 13} y="3.500" width="12" height="6" fill="#f4d78a" stroke="#a89040" strokeWidth=".5" />)}
      </svg>
      <span className="ml-[161px] mt-[5px] w-[15px] shrink-0">X:</span>
      {inputs.map(([v, c]) => <span key={v} className={`mt-[5px] h-[16px] text-center border border-[#ccc] shrink-0 ${c}`}>{v}</span>)}
      <span className="mt-[5px] ml-[1px] w-[15px] shrink-0">Y:</span>
      {inputsY.map(([v, c]) => <span key={v} className={`mt-[5px] h-[16px] text-center border border-[#ccc] shrink-0 ${c}`}>{v}</span>)}
      <span className="mt-[5px] ml-[4px] w-[24px] h-[16px] text-center border border-[#ccc] shrink-0">✓</span>
      <span className="mt-[5px] ml-[170px] w-[10px] shrink-0">1:</span>
      <span className="mt-[5px] ml-[3px] w-[108px] h-[16px] text-center border border-[#ccc] shrink-0">160545</span>
      <span className="mt-[5px] ml-[1px] w-[23px] h-[16px] text-center border border-[#ccc] shrink-0">✓</span>
    </div>
  )
}

function GeoContent() {
  return (
    <div className="flex flex-1 min-h-0">
      <div className="w-[3px] bg-black" />
      <div className="flex flex-col w-[1255px]">
        <div className="flex items-end h-[33px] shrink-0 pl-[6px] gap-[2px] bg-[linear-gradient(#1a1a1a,#777_6%,#e8e8e8_22%,#fff_40%,#fff_70%,#ddd)] border-b border-dashed border-[#bbb]">
          <Tab label="Mapa" w="w-[48px]" />
          <Tab label="+Temas" w="w-[64px] ml-[1px]" />
          <Tab label="Legenda" w="w-[65px] ml-[2px]" on />
          <Tab label="Links" w="w-[47px] ml-[1px]" />
          <TopMenu />
        </div>
        <div className="flex flex-1 min-h-0">
          <Legend />
          <div className="relative flex-1 overflow-hidden">
            <MapDrawing />
            <MapPanels />
            <MiniMap />
            <ScaleBox />
          </div>
        </div>
        <BottomBar />
      </div>
      <div className="w-[4px] bg-black" />
      <div className="flex flex-col w-[18px] bg-[#f6f6ff]">
        <span className="flex items-center justify-center h-[15px] bg-[#c5d3f6] border border-white rounded-[2px]"><svg width="9" height="6" viewBox="0 0 9 6"><path d="M1 5l3.500-3.500L8 5" fill="none" stroke="#4d6185" strokeWidth="2" /></svg></span>
        <span className="h-[550px] bg-[#c8d5f8] border border-[#fff] rounded-[2px]" />
        <span className="mt-auto flex items-center justify-center h-[15px] bg-[#c5d3f6] border border-white rounded-[2px]"><svg width="9" height="6" viewBox="0 0 9 6"><path d="M1 1l3.500 3.500L8 1" fill="none" stroke="#4d6185" strokeWidth="2" /></svg></span>
      </div>
    </div>
  )
}

function AdminContent() {
  const menus: [string, string][] = [['LAG', 'text-black'], ['Rede GeoPr', 'text-[#f00000]'], ['TERRA LEGAL', 'text-black'], ['i3Geo', 'text-black']]
  return (
    <div className="flex flex-1 min-h-0 bg-white border-t-2 border-l-2 border-[#8f8c7c]">
      <div className="flex-1 pl-[21px] font-['DejaVu_Sans',sans-serif]">
        <h1 className="mt-[21px] flex text-[16px] leading-[20px] font-normal tracking-[0.1px]">
          Administração do i3geo - Árvore de temas
          <svg className="ml-[6px] -mt-[2px]" width="14" height="14" viewBox="0 0 14 14"><circle cx="7" cy="7" r="6.500" fill="#6ea0e8" stroke="#3c68b0" /><text x="7" y="10.500" textAnchor="middle" fontSize="10" fill="#fff" fontWeight="bold">?</text></svg>
        </h1>
        <div className="mt-[32px] ml-[2px] flex gap-[10px] font-['Liberation_Sans',sans-serif] text-[12.500px]">
          <button className="w-[140px] h-[26px] border border-[#8a8a8a] bg-[linear-gradient(#f6f6f6,#dadada)]">Editar lista de menus</button>
          <button className="w-[140px] h-[26px] border border-[#8a8a8a] bg-[linear-gradient(#f6f6f6,#dadada)]">Editar lista de grupos</button>
          <button className="w-[165px] h-[26px] border border-[#8a8a8a] bg-[linear-gradient(#f6f6f6,#dadada)]">Editar lista de sub-grupos</button>
        </div>
        <p className="mt-[20px] text-[12px] leading-[16px]">Menus existentes:</p>
        <div className="mt-[18px] flex flex-col">
          {menus.map(([label, c]) => (
            <div key={label} className="flex items-center h-[22px]">
              <span className="flex items-center justify-center w-[14px] h-[14px] border border-[#aaa] rounded-[2px] bg-[linear-gradient(#fafafa,#ddd)]">
                <svg width="10" height="10" viewBox="0 0 10 10"><path d="M1 5h8M5 1v8" stroke="#555" strokeWidth="1.600" /></svg>
              </span>
              <span className="w-[7px] border-t border-dotted border-[#999]" />
              <span className={`font-bold text-[12px] ${c}`}>{label}</span>
            </div>
          ))}
        </div>
      </div>
      <div className="flex flex-col w-[18px] bg-[#fbfbf6]">
        <span className="flex items-center justify-center h-[15px] bg-[#f2f2ea] border border-[#e2e2da]"><svg width="9" height="6" viewBox="0 0 9 6"><path d="M1 5l3.500-3.500L8 5" fill="none" stroke="#c2c2b8" strokeWidth="2" /></svg></span>
        <span className="mt-auto flex items-center justify-center h-[15px] bg-[#f2f2ea] border border-[#e2e2da]"><svg width="9" height="6" viewBox="0 0 9 6"><path d="M1 1l3.500 3.500L8 1" fill="none" stroke="#c2c2b8" strokeWidth="2" /></svg></span>
      </div>
    </div>
  )
}

function TaskIcon({ kind }: { kind: string }) {
  if (kind === 'ie') return <IeIcon size={16} />
  if (kind === 'folder') return <svg width="16" height="16" viewBox="0 0 16 16"><path d="M1 3h5l2 2h7v9H1z" fill="#f4d070" stroke="#b08a30" /><path d="M5 6h8v7H5z" fill="#eef" /></svg>
  if (kind === 'pdf') return <svg width="16" height="16" viewBox="0 0 16 16"><path d="M3 1h10v14H3z" fill="#fff" /><path d="M0 1h9v4H0z" fill="#d8201c" /><path d="M5 13c2-3 3-6 3-8 1 3 3 5 5 5-3 0-6 1-8 3z" fill="none" stroke="#d8201c" /></svg>
  if (kind === 'hgh') return <svg width="16" height="16" viewBox="0 0 16 16"><rect width="16" height="16" fill="#4a8a5a" /><path d="M2 2v12M6 2v12M10 2v12M14 2v12" stroke="#e8c040" strokeWidth="2" /><path d="M0 8h16" stroke="#d03c3c" strokeWidth="2" /></svg>
  if (kind === 'app') return <svg width="16" height="16" viewBox="0 0 16 16"><rect width="16" height="16" fill="#143c5c" /><path d="M1 6l14-4M1 10l14-4" stroke="#a8d0e8" strokeWidth="1.400" /></svg>
  if (kind === 'sphere') return <svg width="16" height="16" viewBox="0 0 16 16"><circle cx="8" cy="8" r="8" fill="#4a4a4a" /><path d="M2 4l12 8M2 12L14 4M8 0v16M0 8h16" stroke="#999" strokeWidth=".8" /></svg>
  return <svg width="16" height="16" viewBox="0 0 16 16"><path d="M2 1h12v14H2z" fill="#fff" stroke="#778" /><path d="M11 5a3.500 3.500 0 1 0 0 6" fill="none" stroke="#d8a020" strokeWidth="2" /></svg>
}

function Taskbar() {
  const items: [string, string, string, boolean?][] = [
    ['ie', 'We...', 'w-[73px]'], ['folder', '\\\\m...', 'w-[73px]'], ['ie', 'Gm...', 'w-[73px]'], ['ie', 'xo...', 'w-[73px]'],
    ['ie', 'i3G...', 'w-[73px]', true], ['hgh', 'Mis...', 'w-[73px]'], ['ie', 'Árv...', 'w-[73px]'], ['pdf', 'bilh...', 'w-[74px]'],
    ['folder', 'C:\\...', 'w-[75px]'], ['app', 'Apr...', 'w-[75px]'], ['sphere', '(Un...', 'w-[74px]'], ['note', 'Sem...', 'w-[75px]'],
  ]
  return (
    <div className="flex items-center h-[30px] shrink-0 bg-[linear-gradient(#1f56d0,#3a80f0_12%,#2663e0_45%,#245edb_85%,#1c4cb8)] text-white text-[12px]">
      <div className="flex items-center w-[110px] h-full pl-[10px] rounded-r-[12px] bg-[linear-gradient(#3f9a44,#4fb24f_20%,#399a3c_70%,#2a7a2c)]">
        <svg width="20" height="20" viewBox="0 0 20 18"><path d="M1 3c3-2 5-2 8 0L7.500 9C5 7.500 3 7.500 0 9z" fill="#e8502a" /><path d="M10 3c3 2 5 2 9 0l-2 6c-3 1.500-5 1.500-8.500 0z" fill="#9cd04c" /><path d="M0 10c3-1.500 5-1.500 7.500 0L6 16c-2.500-1.500-5-1.500-7.500 0z" fill="#4c8fe8" /><path d="M8.500 10c3 1.500 5 1.500 8 0l-1.500 6c-3 1.500-5 1.500-8 0z" fill="#f5c030" /></svg>
        <span className="ml-[5px] italic font-bold text-[19px] text-[#f0f4ea]">Iniciar</span>
      </div>
      <div className="ml-[10px] flex items-center gap-[2px]">
        {items.map(([k, label, w, on]) => (
          <div key={label} className={`flex items-center h-[25px] pl-[9px] rounded-[3px] tracking-[0.4px] ${w} ${on ? 'bg-[#1e52b7]' : 'bg-[#3c81f3]'}`}>
            <TaskIcon kind={k} />
            <span className="ml-[4px] whitespace-nowrap">{label}</span>
          </div>
        ))}
      </div>
      <span className="ml-[10px] flex items-center justify-center w-[16px] h-[20px] bg-[#3c76dc] text-[12px]">PT</span>
      <div className="ml-auto flex items-center w-[219px] h-full pl-[11px] border-l border-[#0f3a9b] bg-[linear-gradient(#0c8de0,#18a4ee_20%,#0f93e8_70%,#0e86d8)]">
        <svg width="160" height="18" viewBox="0 0 160 18">
          <rect x="0" y="1" width="16" height="16" rx="1" fill="#e87a20" /><path d="M8 3v7M4 12h8" stroke="#fff" />
          <rect x="19" y="1" width="14" height="16" fill="#143c5c" /><path d="M20 7l12-4M20 11l12-4" stroke="#a8d0e8" />
          <path d="M36 3h10l4 4v6l-4 4H40l-4-4z" fill="#dfe6ee" /><path d="M40 6l6 6M46 6l-6 6" stroke="#8aa0b8" />
          <rect x="54" y="1" width="11" height="16" fill="#eee" stroke="#555" /><path d="M62 8l6 4-6 4z" fill="#16903c" />
          <path d="M78 2h4l3 5v10h-9V7z" fill="#000" />
          <rect x="91" y="1" width="16" height="16" fill="#fff" /><path d="M93 15V4l5 7 5-7v11" fill="none" stroke="#d01818" strokeWidth="2.600" />
          <rect x="108" y="3" width="15" height="11" fill="#a8c4ea" stroke="#586f98" /><rect x="111" y="14" width="9" height="3" fill="#dde" />
          <circle cx="133" cy="9" r="7" fill="#7a7a7a" /><circle cx="136" cy="12" r="4" fill="#e01c1c" />
          <rect x="144" y="2" width="16" height="14" rx="2" fill="#10283c" /><ellipse cx="152" cy="9" rx="4" ry="5" fill="#000" stroke="#9ab" />
        </svg>
        <span className="ml-[7px] text-[12px]">08:19</span>
      </div>
    </div>
  )
}

export default function App() {
  return (
    <div className="grid grid-cols-2 w-[2560px] h-[1024px] overflow-hidden bg-white text-black text-[11px] font-['Liberation_Sans',sans-serif]">
      <div className="flex flex-col h-[1024px] min-h-0">
        <WindowChrome title="Terra Legal - Acervo - i3Geo - Microsoft Internet Explorer" url="http://mrfa189302/i3geo/aplicmap/geral.htm?7c79fc5e8c3d74cf1794f1d7ce9d1f17#" active>
          <GeoContent />
        </WindowChrome>
        <Taskbar />
      </div>
      <div className="flex flex-col h-[1024px] min-h-0">
        <WindowChrome title="Árvore de temas - Microsoft Internet Explorer" url="http://mrfa189302/i3geo/admin/html/arvore.html" active={false}>
          <AdminContent />
        </WindowChrome>
      </div>
    </div>
  )
}
